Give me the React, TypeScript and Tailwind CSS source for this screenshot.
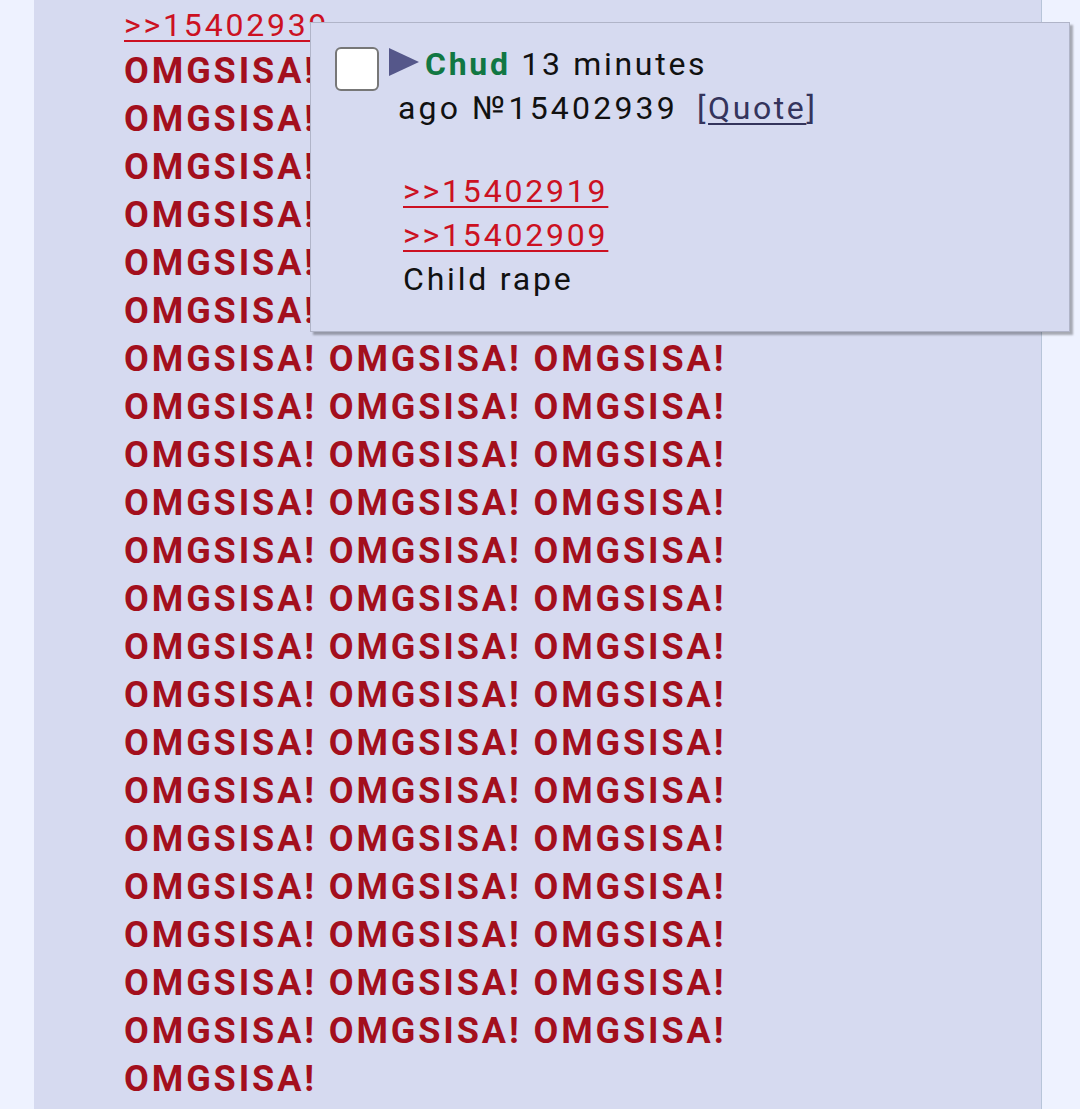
import type React from "react";

const FONT = { fontFamily: "Roboto, 'Noto Sans', sans-serif" };

const LINE = "OMGSISA! OMGSISA! OMGSISA!";

const Popup: React.FC = () => (
  <div className="absolute left-[310px] top-[22px] h-[310px] w-[760px] border border-[#b0b4c8] bg-[#d6daf0] pl-[24px] pt-[19px] shadow-[3px_3px_2px_rgba(0,0,0,0.3)]">
    <div className="flex items-start">
      <span className="mt-[5px] block h-[44px] w-[44px] shrink-0 rounded-[6px] border-2 border-[#777] bg-white" />
      <div className="ml-[10px] pl-[9px] text-[32px] leading-[44px] tracking-[2.7px] text-[#111]">
        <svg
          viewBox="0 0 30 28"
          className="-ml-[9px] mr-[6px] inline-block h-[28px] w-[30px] align-[-1px]"
        >
          <polygon points="0,0 30,14 0,28" fill="#55578a" />
        </svg>
        <span className="font-bold text-[#117743]">Chud</span> 13 minutes
        <br />
        <span className="tracking-[3.2px]">ago №15402939</span>
        <span className="ml-[19px] tracking-[2.6px] text-[#34345c]">
          [<span className="underline decoration-2 underline-offset-4">Quote</span>]
        </span>
      </div>
    </div>
    <div className="mt-[39px] pl-[68px] text-[32px] leading-[44px] tracking-[2.8px] text-[#111]">
      <div>
        <span className="text-[#cc1122] underline decoration-2 underline-offset-4">
          &gt;&gt;15402919
        </span>
      </div>
      <div>
        <span className="text-[#cc1122] underline decoration-2 underline-offset-4">
          &gt;&gt;15402909
        </span>
      </div>
      <div>Child rape</div>
    </div>
  </div>
);

export default function App() {
  const lines = Array.from({ length: 21 }, () => LINE);
  return (
    <div
      className="relative h-[1109px] w-[1080px] overflow-hidden bg-[#eef2ff]"
      style={FONT}
    >
      <div className="ml-[34px] h-full w-[1008px] border-r border-[#b7c5d9] bg-[#d6daf0] pl-[90px] pt-[3px]">
        <div className="text-[32px] leading-[44px] tracking-[2.8px]">
          <span className="text-[#cc1122] underline decoration-2 underline-offset-4">
            &gt;&gt;15402939
          </span>
        </div>
        <div className="text-[36px] font-bold leading-[48px] tracking-[2.9px] text-[#a30f1d]">
          {lines.map((l, i) => (
            <div key={i} className="whitespace-nowrap">
              {l}
            </div>
          ))}
          <div>OMGSISA!</div>
        </div>
      </div>
      <Popup />
    </div>
  );
}
